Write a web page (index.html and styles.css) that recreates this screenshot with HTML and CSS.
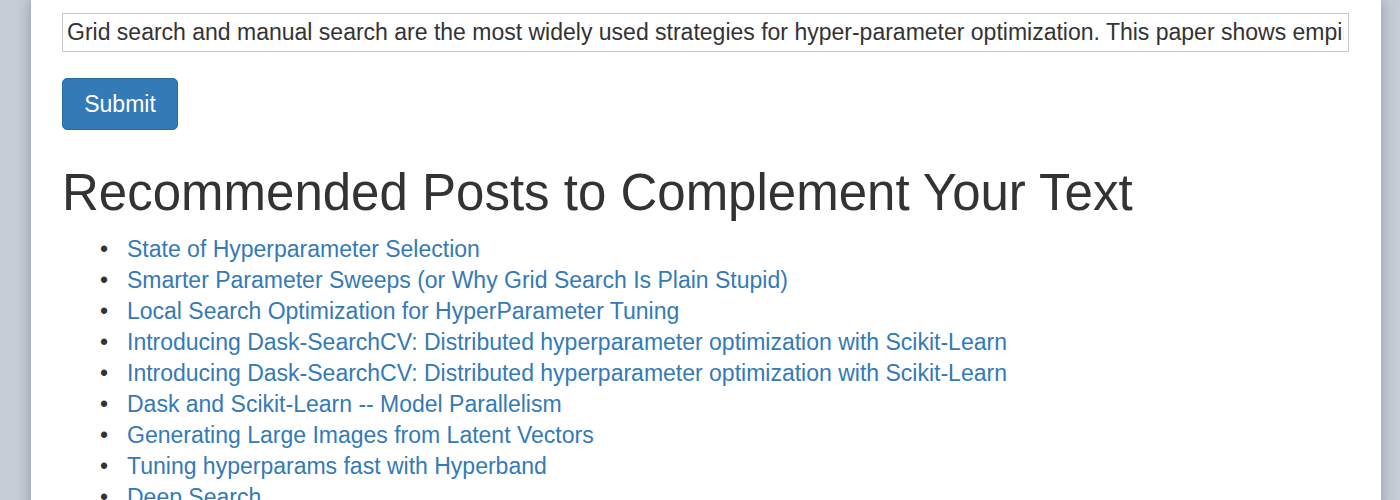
FILE: index.html
```html
<!DOCTYPE html>
<html>
<head>
<meta charset="utf-8">
<link rel="stylesheet" href="styles.css">
</head>
<body>
<div class="panel">
  <form class="form">
    <input class="text-input" type="text" value="Grid search and manual search are the most widely used strategies for hyper-parameter optimization. This paper shows empirically and theoretically that randomly chosen trials are more efficient for hyper-parameter optimization than trials on a grid.">
    <button class="btn" type="button">Submit</button>
  </form>
  <h1 class="title">Recommended Posts to Complement Your Text</h1>
  <ul class="posts">
    <li><a href="#">State of Hyperparameter Selection</a></li>
    <li><a href="#">Smarter Parameter Sweeps (or Why Grid Search Is Plain Stupid)</a></li>
    <li><a href="#">Local Search Optimization for HyperParameter Tuning</a></li>
    <li><a href="#">Introducing Dask-SearchCV: Distributed hyperparameter optimization with Scikit-Learn</a></li>
    <li><a href="#">Introducing Dask-SearchCV: Distributed hyperparameter optimization with Scikit-Learn</a></li>
    <li><a href="#">Dask and Scikit-Learn -- Model Parallelism</a></li>
    <li><a href="#">Generating Large Images from Latent Vectors</a></li>
    <li><a href="#">Tuning hyperparams fast with Hyperband</a></li>
    <li><a href="#">Deep Search</a></li>
  </ul>
</div>
</body>
</html>
```

FILE: styles.css
```css
html, body {
  margin: 0;
  padding: 0;
  height: 100%;
  overflow: hidden;
}
body {
  background: #c6cdd6;
  font-family: "Liberation Sans", Arial, sans-serif;
  color: #333;
}
.panel {
  margin-left: 31px;
  width: 1350px;
  min-height: 100%;
  background: #fff;
  box-shadow: 0 0 14px rgba(40, 50, 70, 0.35);
  padding: 13px 32px 0 31px;
  box-sizing: border-box;
}
.form {
  display: flex;
  flex-direction: column;
  align-items: flex-start;
  gap: 26px;
}
.text-input {
  width: 1287px;
  height: 39px;
  box-sizing: border-box;
  border: 1px solid #c8c8c8;
  padding: 0 4px;
  font-family: "Liberation Sans", Arial, sans-serif;
  font-size: 23px;
  color: #333;
  background: #fff;
  outline: none;
  margin: 0;
}
.btn {
  width: 116px;
  height: 52px;
  background: #337ab7;
  border: 1px solid #2e6da4;
  border-radius: 5px;
  color: #fff;
  font-family: "Liberation Sans", Arial, sans-serif;
  font-size: 23px;
  padding: 0;
  margin: 0;
}
.title {
  font-size: 51px;
  font-weight: 500;
  margin: 33px 0 0 0;
  line-height: 60px;
  color: #333;
}
.posts {
  margin: 11px 0 0 0;
  padding-left: 65px;
  font-size: 23px;
  line-height: 31px;
  list-style: none;
}
.posts li::before {
  content: "\2022";
  display: inline-block;
  width: 0;
  margin-left: -27px;
  margin-right: 27px;
  color: #333;
}
.posts a {
  color: #337ab7;
  text-decoration: none;
}
```
